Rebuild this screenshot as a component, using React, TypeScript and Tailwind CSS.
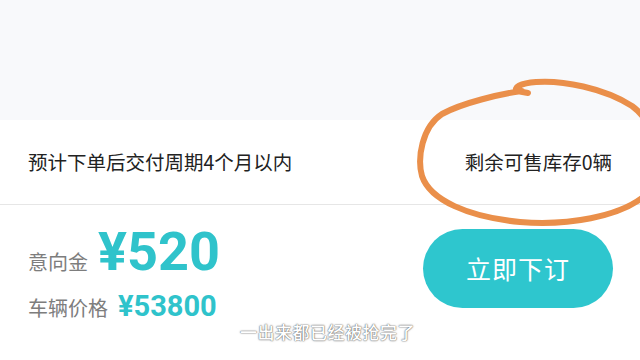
export default function App() {
  return (
    <div
      className="relative flex h-[360px] w-[640px] flex-col overflow-hidden bg-white"
      style={{ fontFamily: '"Noto Sans CJK SC", "Noto Sans", sans-serif' }}
    >
      <div className="h-[120px] shrink-0 bg-[#f8f9fb]" />

      <div className="flex h-[85px] shrink-0 items-center justify-between border-b border-[#e6e6e6] px-[28px] text-[19.5px] text-[#222]">
        <span>预计下单后交付周期4个月以内</span>
        <span>剩余可售库存0辆</span>
      </div>

      <div className="flex items-start justify-between pl-[28px] pr-[27px] pt-[20px]">
        <div className="flex flex-col">
          <div className="flex items-baseline gap-[10px]">
            <span className="text-[20px] text-[#7d7d7d]">意向金</span>
            <span className="font-['Roboto',sans-serif] text-[54px] font-bold leading-[54px] text-[#2fc3cb]">¥520</span>
          </div>
          <div className="mt-[11px] flex items-baseline gap-[10px]">
            <span className="text-[20px] text-[#7d7d7d]">车辆价格</span>
            <span className="font-['Roboto',sans-serif] text-[29px] font-bold leading-[32px] text-[#2fc3cb]">¥53800</span>
          </div>
        </div>
        <button className="mt-[4px] flex h-[79px] w-[190px] items-center justify-center rounded-full bg-[#2ec6ce] text-[25px] tracking-[1px] text-white">
          立即下订
        </button>
      </div>

      <div className="absolute left-[240px] top-[319px] text-[17px] font-medium tracking-[0.5px] text-white [text-shadow:0_0_1px_#555,0_0_2px_#777]">
        一出来都已经被抢完了
      </div>

      <svg className="pointer-events-none absolute left-0 top-0" width="640" height="360" viewBox="0 0 640 360">
        <path
          d="M 522 91 C 500 94, 462 103, 442 114 C 422 127, 417 158, 422 176 C 430 200, 468 217, 520 222 C 570 226, 618 216, 642 198 C 664 176, 662 128, 632 106 C 604 88, 562 80, 536 82 C 520 83, 513 88, 517 91 L 528 93"
          fill="none"
          stroke="#ea8f4a"
          strokeWidth="6"
          strokeLinecap="round"
          strokeLinejoin="round"
        />
      </svg>
    </div>
  );
}
